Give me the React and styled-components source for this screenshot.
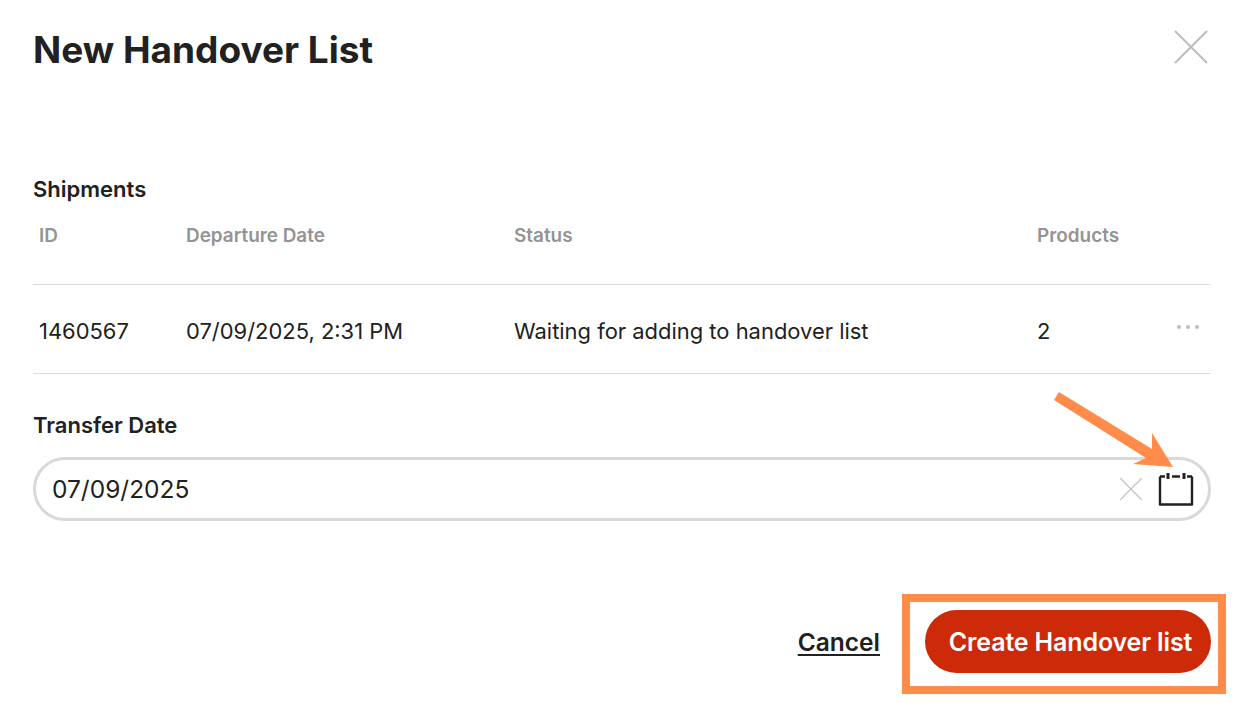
import React from 'react';
import styled, { createGlobalStyle } from 'styled-components';

const GlobalStyle = createGlobalStyle`
  html, body {
    margin: 0;
    padding: 0;
    background: #fff;
  }
  body {
    font-family: Inter, "Liberation Sans", sans-serif;
    color: #212121;
  }
`;

const Dialog = styled.div`
  position: relative;
  width: 1244px;
  height: 708px;
  box-sizing: border-box;
  padding: 0 33px;
  overflow: hidden;
`;

const Header = styled.header`
  display: flex;
  justify-content: space-between;
  height: 169px;
`;

const Title = styled.h1`
  margin: 27px 0 0;
  font-size: 37px;
  line-height: 46px;
  font-weight: 700;
`;

const CloseButton = styled.button`
  margin: 29px 2px 0 0;
  padding: 0;
  width: 36px;
  height: 36px;
  border: 0;
  background: none;
`;

const SectionLabel = styled.div`
  font-size: 22px;
  line-height: 40px;
  font-weight: 600;
`;

const Row = styled.div`
  display: grid;
  grid-template-columns: 147px 328px 523px 1fr 34px;
  align-items: center;
  padding-left: 6px;
  box-sizing: border-box;
  border-bottom: 1px solid #dcdcdc;
  height: ${p => p.$height}px;
`;

const HeadCell = styled.div`
  font-size: 18.9px;
  line-height: 24px;
  font-weight: 600;
  color: #949494;
  align-self: start;
  padding-top: 15px;
`;

const Cell = styled.div`
  font-size: 21.95px;
  line-height: 28px;
  font-weight: 400;
  padding-top: 3px;
`;

const MoreDots = styled.div`
  display: flex;
  gap: 5px;
  margin-bottom: 4px;
`;

const Dot = styled.span`
  width: 4px;
  height: 4px;
  border-radius: 50%;
  background: #bdbdbd;
`;

const TransferLabel = styled(SectionLabel)`
  margin-top: 31px;
`;

const DateField = styled.div`
  display: flex;
  align-items: center;
  height: 64px;
  box-sizing: border-box;
  margin-top: 12px;
  padding: 0 14px 0 16px;
  border: 3px solid #d9d9d9;
  border-radius: 32px;
`;

const DateValue = styled.div`
  flex: 1;
  font-size: 24.5px;
  line-height: 32px;
`;

const ClearButton = styled.button`
  display: flex;
  margin-right: 15px;
  padding: 0;
  border: 0;
  background: none;
`;

const CalendarButton = styled.button`
  display: flex;
  padding: 0;
  border: 0;
  background: none;
`;

const Footer = styled.footer`
  display: flex;
  justify-content: flex-end;
  align-items: center;
  gap: 45px;
  margin-top: 89px;
`;

const CancelLink = styled.a`
  font-size: 24.5px;
  font-weight: 600;
  color: #212121;
  text-decoration: underline;
  text-underline-offset: 3px;
`;

const CreateButton = styled.button`
  width: 286px;
  height: 63px;
  padding: 0 0 0 5px;
  border: 0;
  border-radius: 32px;
  background: #cc2a08;
  color: #fff;
  font-family: inherit;
  font-size: 25px;
  font-weight: 600;
  letter-spacing: -0.15px;
`;

const Highlight = styled.div`
  position: absolute;
  left: 902px;
  top: 594px;
  width: 324px;
  height: 100px;
  box-sizing: border-box;
  border: 8px solid #ff8c4b;
`;

const ArrowOverlay = styled.svg`
  position: absolute;
  left: 1040px;
  top: 380px;
`;

const CrossIcon = ({ size, color }) => (
  <svg width={size} height={size} viewBox="0 0 36 36" fill="none">
    <path d="M2 2L34 34M34 2L2 34" stroke={color} strokeWidth="2" />
  </svg>
);

const CalendarIcon = () => (
  <svg width="36" height="36" viewBox="0 0 36 36" fill="none">
    <path
      d="M2 5.5V33.5H34V5.5M2 5.5H7M29 5.5H34M14 5.5H22"
      stroke="#212121"
      strokeWidth="2.4"
      strokeLinejoin="round"
    />
    <path d="M10 2V8M26 2V8" stroke="#212121" strokeWidth="3" />
  </svg>
);

const columns = ['ID', 'Departure Date', 'Status', 'Products'];
const shipment = ['1460567', '07/09/2025, 2:31 PM', 'Waiting for adding to handover list', '2'];

export default function App() {
  return (
    <>
      <GlobalStyle />
      <Dialog>
        <Header>
          <Title>New Handover List</Title>
          <CloseButton>
            <CrossIcon size={36} color="#bdbdbd" />
          </CloseButton>
        </Header>

        <SectionLabel>Shipments</SectionLabel>
        <Row $height={76}>
          {columns.map(name => <HeadCell key={name}>{name}</HeadCell>)}
        </Row>
        <Row $height={89}>
          {shipment.map(value => <Cell key={value}>{value}</Cell>)}
          <MoreDots>
            <Dot />
            <Dot />
            <Dot />
          </MoreDots>
        </Row>

        <TransferLabel>Transfer Date</TransferLabel>
        <DateField>
          <DateValue>07/09/2025</DateValue>
          <ClearButton>
            <CrossIcon size={24} color="#c4c4c4" />
          </ClearButton>
          <CalendarButton>
            <CalendarIcon />
          </CalendarButton>
        </DateField>

        <Footer>
          <CancelLink>Cancel</CancelLink>
          <CreateButton>Create Handover list</CreateButton>
        </Footer>

        <Highlight />
        <ArrowOverlay width="160" height="90" viewBox="0 0 160 90">
          <path d="M19 12L112 69L112 53L133 87L93 84L106 78L14 20Z" fill="#ff8c4b" />
        </ArrowOverlay>
      </Dialog>
    </>
  );
}
